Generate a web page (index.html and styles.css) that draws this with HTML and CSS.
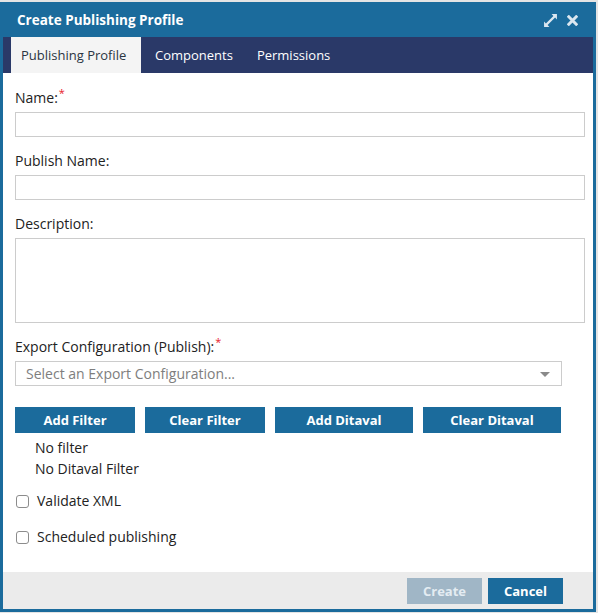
FILE: index.html
```html
<!DOCTYPE html>
<html>
<head>
<meta charset="utf-8">
<link rel="stylesheet" href="styles.css">
</head>
<body>
<div class="dialog">
  <div class="header">
    <div class="title">Create Publishing Profile</div>
    <div class="tools">
      <svg class="icon" width="15" height="15" viewBox="0 0 14 14"><path d="M8 1H13V6L11.3 4.3L4.3 11.3L6 13H1V8L2.7 9.7L9.7 2.7Z" fill="#dbe7f0"/></svg>
      <svg class="icon" width="11" height="11" viewBox="0 0 11 11"><path d="M1.8 1.8L9.2 9.2M9.2 1.8L1.8 9.2" stroke="#dbe7f0" stroke-width="3" stroke-linecap="square"/></svg>
    </div>
  </div>
  <div class="tabs">
    <div class="tab active">Publishing Profile</div>
    <div class="tab">Components</div>
    <div class="tab">Permissions</div>
  </div>
  <div class="content">
    <div class="label">Name:<span class="req">*</span></div>
    <div class="input"></div>
    <div class="label">Publish Name:</div>
    <div class="input"></div>
    <div class="label">Description:</div>
    <div class="input textarea"></div>
    <div class="label">Export Configuration (Publish):<span class="req">*</span></div>
    <div class="select">
      <span class="placeholder">Select an Export Configuration...</span>
      <span class="caret"></span>
    </div>
    <div class="btnrow">
      <div class="btn w120">Add Filter</div>
      <div class="btn w120">Clear Filter</div>
      <div class="btn w138">Add Ditaval</div>
      <div class="btn w138">Clear Ditaval</div>
    </div>
    <div class="info">No filter</div>
    <div class="info">No Ditaval Filter</div>
    <div class="check first"><span class="box"></span>Validate XML</div>
    <div class="check"><span class="box"></span>Scheduled publishing</div>
  </div>
  <div class="footer">
    <div class="btn fbtn disabled">Create</div>
    <div class="btn fbtn">Cancel</div>
  </div>
</div>
</body>
</html>
```

FILE: styles.css
```css
html, body {
  margin: 0;
  padding: 0;
  background: #e4e4e4;
  font-family: "Open Sans", "Noto Sans", sans-serif;
}
.dialog {
  box-sizing: border-box;
  margin-top: 2px;
  width: 596px;
  height: 610px;
  border: 3px solid #1b6b9c;
  border-top: 0;
  display: flex;
  flex-direction: column;
  background: #fff;
}
.header {
  height: 35px;
  flex: none;
  background: #1b6b9c;
  display: flex;
  align-items: center;
  justify-content: space-between;
  padding: 0 15px 0 14px;
}
.title {
  color: #fff;
  font-weight: 700;
  font-size: 13.5px;
}
.tools {
  display: flex;
  align-items: center;
  gap: 9px;
  margin-top: 1px;
}
.icon { display: block; }
.tabs {
  height: 36px;
  flex: none;
  background: #2a3968;
  display: flex;
  padding-left: 8px;
}
.tab {
  color: #fff;
  font-size: 13px;
  line-height: 36px;
  padding: 0 12px;
}
.tab.active {
  background: #f4f4f4;
  color: #2a3442;
  padding: 0 12px 0 10px;
  width: 108px;
  margin-right: 2px;
}
.content {
  flex: 1;
  padding: 15px 8px 0 12px;
  color: #222;
}
.label {
  font-size: 14px;
  line-height: 20px;
  height: 20px;
  margin-bottom: 4px;
}
.req {
  color: #e8202a;
  font-size: 11px;
  line-height: 0;
  position: relative;
  top: -6px;
  margin-left: 1px;
}
.input {
  box-sizing: border-box;
  height: 25px;
  border: 1px solid #cccccc;
  margin-bottom: 14px;
}
.textarea {
  height: 85px;
  margin-bottom: 14px;
}
.select {
  box-sizing: border-box;
  width: 547px;
  height: 25px;
  border: 1px solid #cccccc;
  display: flex;
  align-items: center;
  justify-content: space-between;
  padding: 0 11px 0 10px;
}
.placeholder {
  color: #7e7e7e;
  font-size: 14px;
}
.caret {
  width: 0;
  height: 0;
  border-left: 5px solid transparent;
  border-right: 5px solid transparent;
  border-top: 5px solid #8a8a8a;
  margin-top: 1px;
}
.btnrow {
  display: flex;
  gap: 10px;
  margin-top: 21px;
}
.btn {
  box-sizing: border-box;
  height: 26px;
  background: #1b6b9c;
  color: #fff;
  font-weight: 700;
  font-size: 13px;
  display: flex;
  align-items: center;
  justify-content: center;
}
.w120 { width: 120px; }
.w138 { width: 138px; }
.info {
  font-size: 14px;
  line-height: 21px;
  margin-left: 20px;
}
.btnrow + .info { margin-top: 4px; }
.check {
  display: flex;
  align-items: center;
  font-size: 14px;
  line-height: 20px;
  margin-top: 16px;
}
.check.first { margin-top: 12px; }
.box {
  box-sizing: border-box;
  width: 13px;
  height: 13px;
  border: 1px solid #8c8c8c;
  border-radius: 3px;
  margin-left: 1px;
  margin-right: 8px;
}
.footer {
  height: 37px;
  flex: none;
  background: #ebebeb;
  display: flex;
  justify-content: flex-end;
  gap: 6px;
  padding: 6px 30px 0 0;
  box-sizing: border-box;
}
.fbtn {
  width: 75px;
}
.disabled {
  background: #a0b6c6;
  color: #e4ecf2;
}
```
